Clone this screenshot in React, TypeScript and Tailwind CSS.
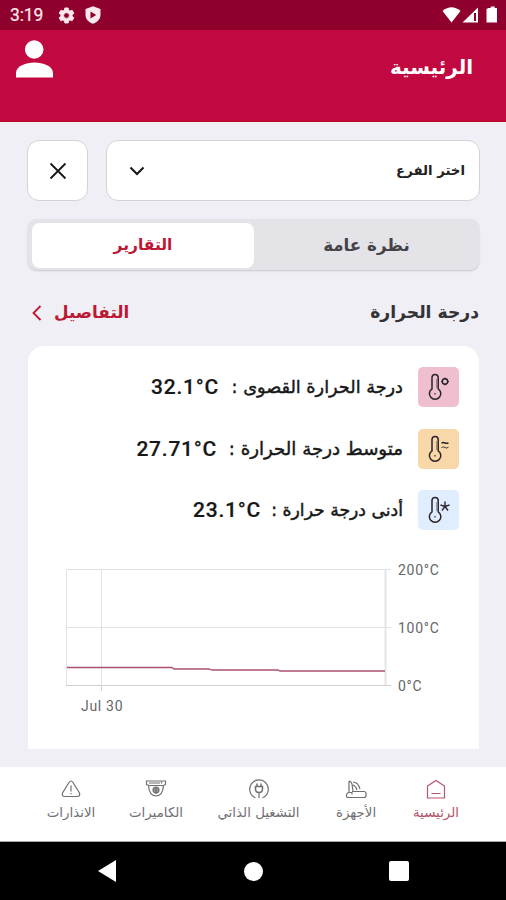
import type { ReactNode } from "react";

const AR = "font-['DejaVu_Sans',sans-serif] whitespace-nowrap";

function StatusBar() {
  return (
    <div className="flex h-[30px] items-center bg-[#8f002c] pl-[10px] pr-[8px] text-[#fbe9ee]">
      <span className="mt-[2px] w-[47px] font-[Roboto,sans-serif] text-[17.5px] leading-none tracking-[-0.1px] [-webkit-text-stroke:.2px]">3:19</span>
      <svg className="h-[19px] w-[19px]" viewBox="0 0 24 24" fill="currentColor">
        <path stroke="currentColor" strokeWidth="1" d="M19.14 12.94c.04-.3.06-.61.06-.94s-.02-.64-.07-.94l2.03-1.58a.49.49 0 0 0 .12-.61l-1.92-3.32a.49.49 0 0 0-.59-.22l-2.39.96a7 7 0 0 0-1.62-.94l-.36-2.54a.48.48 0 0 0-.48-.41h-3.84a.48.48 0 0 0-.47.41l-.36 2.54c-.59.24-1.13.57-1.62.94l-2.39-.96a.48.48 0 0 0-.59.22L2.74 8.87a.48.48 0 0 0 .12.61l2.03 1.58c-.05.3-.09.63-.09.94s.02.64.07.94l-2.03 1.58a.49.49 0 0 0-.12.61l1.92 3.32c.12.22.37.29.59.22l2.39-.96c.5.38 1.03.7 1.62.94l.36 2.54c.05.24.24.41.48.41h3.84c.24 0 .44-.17.47-.41l.36-2.54c.59-.24 1.13-.56 1.62-.94l2.39.96c.22.08.47 0 .59-.22l1.92-3.32a.48.48 0 0 0-.12-.61zM12 15.6A3.6 3.6 0 1 1 12 8.4a3.6 3.6 0 0 1 0 7.2" />
      </svg>
      <svg className="ml-[9px] h-[18px] w-[16px]" viewBox="0 0 16 18" fill="currentColor" fillRule="evenodd">
        <path d="M8 .3 15.500 3v6c0 4-3.500 7.500-7.500 8.800C4 16.500.5 13 .5 9V3zM5.500 5.400v7L11.200 9z" />
      </svg>
      <svg className="ml-auto h-[18px] w-[56px]" viewBox="0 0 56 18" fill="#fff">
        <path d="M.5 5Q9.500-2.500 18.500 5L9.500 16.500Z" />
        <path d="M36 1.500v15H20.500Z" />
        <path d="M32 7h2v8h-2z" fill="#8f002c" />
        <path d="M46.500 2h2.200V.5h4V2H55v14.500H44.500V3z" />
      </svg>
    </div>
  );
}

function Thermo({ children }: { children: ReactNode }) {
  return (
    <svg className="h-[40px] w-[40px]" viewBox="0 0 40 40" fill="none" stroke="#29232a" strokeWidth="1.500">
      <path d="M13 21.800V10.500a3.100 3.100 0 0 1 6.200 0v11.300a5.700 5.700 0 1 1-6.200 0Z" />
      <path d="M17.500 12v9" strokeWidth=".4" />
      <circle cx="16" cy="26.800" r=".6" strokeWidth=".6" />
      {children}
    </svg>
  );
}

const readings = [
  {
    label: "درجة الحرارة القصوى :",
    value: "32.1°C",
    tile: "bg-[#efbfd0]",
    text: "w-[173px] text-[17.7px]",
    mark: <><circle cx="26" cy="14.500" r="2.700" /><path d="M26 10.500v2M26 16.500v2M22 14.500h2M28 14.500h2" strokeWidth="1" /></>,
  },
  {
    label: "متوسط درجة الحرارة :",
    value: "27.71°C",
    tile: "bg-[#f8d7a9]",
    text: "w-[175px] text-[18.2px]",
    mark: <><path d="M22.500 14q2-.8 3.500 0t3.500-.2" /><path d="M22.500 18.500q2-1.300 3.500 0t3.500-.3" strokeWidth=".9" /></>,
  },
  {
    label: "أدنى درجة حرارة :",
    value: "23.1°C",
    tile: "bg-[#dfedff]",
    text: "w-[131px] text-[17.2px]",
    mark: <path d="M26 11.500v5M21.500 15l4.500 1.500 4.500-1.500M23 20.500l3-4 3 4" strokeWidth="1.400" />,
  },
];

function Chart() {
  return (
    <svg className="mt-[30px] ml-[28px] h-[160px] w-[400px]" viewBox="56 560 400 160" fontFamily="Roboto, sans-serif" fontSize="14" fill="#666" letterSpacing=".7">
      <g stroke="#e2e2e4" fill="none">
        <path d="M66 569.500H391M66 627.500H391M66.500 569V686M101.500 569V686" />
        <path d="M385.500 569V686" stroke="#e4e4e7" strokeWidth="2" />
        <path d="M66 685.500H391M101.500 686V691" stroke="#cfcfd2" />
      </g>
      <path d="M67 667.500H172L174 669H209L212 670H278L280 671H385" stroke="#a9526b" strokeWidth="1.300" fill="none" />
      <text x="398" y="574.500">200°C</text>
      <text x="398" y="632.500">100°C</text>
      <text x="398" y="690.500">0°C</text>
      <text x="81" y="710.500">Jul 30</text>
    </svg>
  );
}

const tabs = [
  { label: "الرئيسية", box: "w-[80px]", icon: <path d="M2.500 8 11 2.500l8.500 5.500V20h-17ZM6.500 15.500h9" /> },
  { label: "الأجهزة", box: "w-[80px]", icon: <><path d="M4 3v11M4 3q2 0 3 3l1 7M8 4q5 0 7 7M8 7q3 1 4 5" /><path d="M7 13.500h12q2 0 2 2v2q0 2-2 2H3q-2 0-1.500-2.500Q2 14.500 4 14.500h3v2" /></> },
  { label: "التشغيل الذاتي", box: "w-[115px]", icon: <><path d="M7.500 19.800a9.300 9.300 0 1 1 7 0M11 20v-5.500" /><path d="M7.500 8.500h7v2.500q0 3.500-3.500 3.500T7.500 11ZM9 8V5.500M13 8V5.500" strokeWidth="1.500" /></> },
  { label: "الكاميرات", box: "w-[90px]", icon: <><path d="M1.500 3h19v3.500l-2 1H4l-2.500-1ZM4 5h11" /><path d="M3.500 7.500q.5 10 7.500 10.500 7-.5 7.500-10.500" /><circle cx="11" cy="12" r="3" fill="#999" /><path d="M11 9v7M16.500 3.500v2" /></> },
  { label: "الانذارات", box: "w-[80px]", icon: <path d="M9 4.500 2.500 15Q1.500 18.500 5 18.500h12q3.500 0 2.500-3.500L13 4.500q-2-3-4 0ZM11 7.500v6M11 15v1.300" /> },
];

export default function App() {
  return (
    <div className="flex h-[900px] w-[506px] flex-col overflow-hidden bg-[#f0eff5]">
      <StatusBar />
      <header dir="rtl" className="flex h-[92px] items-start justify-between border-b border-[#bd0a1b] bg-[#c10841] pr-[33px] pl-[16px] text-white">
        <h1 className={`${AR} mt-[22px] text-[20px] leading-[30px] font-bold`}>الرئيسية</h1>
        <svg className="mt-[10px] h-[38px] w-[37px]" viewBox="0 0 37 38" fill="currentColor">
          <circle cx="18.200" cy="9.500" r="9.300" />
          <path d="M0 37.500V33C0 26 10 22.500 18.500 22.500S37 26 37 33v4.500Z" />
        </svg>
      </header>

      <main className="flex h-[645px] flex-col px-[27px] pt-[18px] pr-[26px]">
        <div className="flex h-[61px] gap-[18px]">
          <button className="flex w-[61px] items-center justify-center rounded-[12px] border border-[#d3d3d6] bg-white">
            <svg className="h-[18px] w-[18px]" viewBox="0 0 18 18" stroke="#171717" strokeWidth="1.800"><path d="m1.500 1.500 15 15m0-15-15 15" /></svg>
          </button>
          <button dir="rtl" className="flex flex-1 items-center justify-between rounded-[12px] border border-[#d3d3d6] bg-white pr-[14px] pl-[22px] text-[#222]">
            <span className={`${AR} text-[13.3px] font-bold`}>اختر الفرع</span>
            <svg className="h-[10px] w-[16px]" viewBox="0 0 16 10" fill="none" stroke="#171717" strokeWidth="2"><path d="m1.500 1.500 6.500 6.500 6.500-6.500" /></svg>
          </button>
        </div>

        <div dir="rtl" className="mt-[18px] mr-px ml-px flex h-[51px] rounded-[9px] bg-[#e4e3e8] pt-[4px] pb-[2px] pl-[4px] shadow-[0_1px_2px_#c6c6cc]">
          <button className={`${AR} w-[225px] pl-[4px] text-[16.7px] font-bold text-[#444448]`}><span className="-ml-[4px]">نظرة عامة</span></button>
          <button className={`${AR} flex-1 rounded-[8px] bg-white text-[15.5px] font-bold text-[#bd1733]`}>التقارير</button>
        </div>

        <div dir="rtl" className="mt-[21px] flex h-[44px] items-center justify-between pr-px">
          <h2 className={`${AR} text-[17.2px] font-bold text-[#333336]`}>درجة الحرارة</h2>
          <a className="flex items-center gap-[12px] pl-[5px] text-[#bd1733]">
            <span className={`${AR} text-[16.8px] font-bold`}>التفاصيل</span>
            <svg className="h-[16px] w-[10px]" viewBox="0 0 10 16" fill="none" stroke="currentColor" strokeWidth="1.800"><path d="M8.500 1 1.500 8l7 7" /></svg>
          </a>
        </div>

        <section className="mt-[11px] mr-px ml-px h-[403px] rounded-t-[16px] bg-white pt-[21px] pr-[20px]">
          <div className="flex flex-col gap-[21.500px]">
            {readings.map((r) => (
              <div key={r.value} dir="rtl" className="flex h-[40px] items-center text-[#171717]">
                <div className={`w-[41px] rounded-[5px] ${r.tile}`}><Thermo>{r.mark}</Thermo></div>
                <span className={`${AR} ${r.text} mr-[15px] leading-[24px] [-webkit-text-stroke:.45px]`}>{r.label}</span>
                <span dir="ltr" className="mt-[2px] mr-[11px] font-[Roboto,sans-serif] text-[21px] font-medium tracking-[0.75px] [-webkit-text-stroke:.2px]">{r.value}</span>
              </div>
            ))}
          </div>
          <div className="flex"><Chart /></div>
        </section>
      </main>

      <nav dir="rtl" className="flex h-[75px] border-b border-[#aaa] bg-white pt-[11px] pr-[30px]">
        {tabs.map((t, i) => (
          <div key={t.label} className={`flex flex-col items-center ${t.box} ${i === 0 ? "text-[#b5546c]" : "text-[#707073]"}`}>
            <svg className="h-[22px] w-[22px]" viewBox="0 0 22 22" fill="none" stroke="currentColor" strokeWidth="1.200">{t.icon}</svg>
            <span className={`${AR} mt-[3px] text-[13.4px] leading-[20px]`}>{t.label}</span>
          </div>
        ))}
      </nav>

      <div className="flex h-[58px] items-center justify-center gap-[126px] bg-black">
        <svg className="h-[22px] w-[20px]" viewBox="0 0 20 22" fill="#fff"><path d="M18 0v22L0 11Z" /></svg>
        <div className="h-[19px] w-[19px] rounded-full bg-white" />
        <div className="h-[20px] w-[20px] rounded-[2px] bg-white" />
      </div>
    </div>
  );
}
